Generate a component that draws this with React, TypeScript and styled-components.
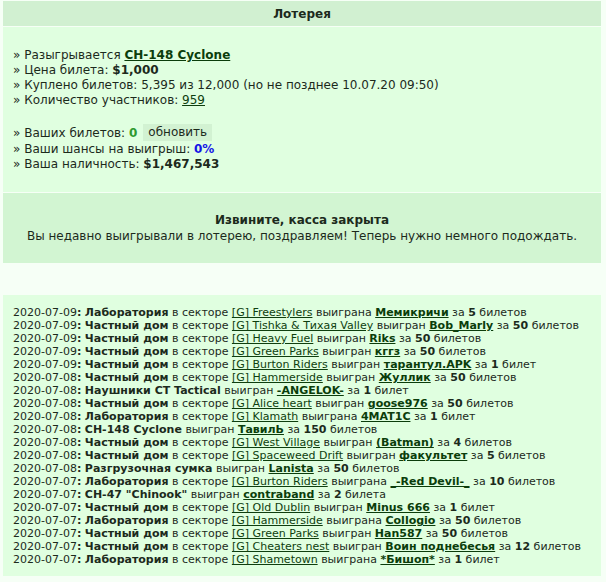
import React from "react";
import styled, { createGlobalStyle, css } from "styled-components";

const GlobalStyle = createGlobalStyle`
    body {
        margin: 0;
        background: #f6fff6;
        font-family: Verdana, "DejaVu Sans", sans-serif;
        color: #1c2a1c;
    }
`;

interface LinkProps {
    $bold?: boolean;
};

interface NumberProps {
    $tone?: "green" | "blue";
};

const Page = styled.div`
    display: flex;
    flex-direction: column;
    gap: 1px;
    padding: 1px 5px 8px 3px;
`;

const Header = styled.div`
    height: 25px;
    line-height: 27px;
    background: #d1f0d1;
    text-align: center;
    font-size: 12px;
    font-weight: bold;
`;

const InfoPanel = styled.div`
    display: flex;
    flex-direction: column;
    gap: 16px;
    background: #e0ffe0;
    padding: 21px 10px 20px 10px;
    font-size: 12px;
`;

const InfoGroup = styled.div`
    display: flex;
    flex-direction: column;
`;

const InfoLine = styled.div`
    line-height: 15px;
    white-space: nowrap;
`;

const Strong = styled.b`
    font-weight: bold;
`;

const Number = styled.b<NumberProps>`
    font-weight: bold;

    ${({ $tone }) => $tone === "green" && css`
        color: #2f9a2f;
    `};

    ${({ $tone }) => $tone === "blue" && css`
        color: #1515e6;
    `};
`;

const Link = styled.a<LinkProps>`
    color: #0e3e0e;
    text-decoration: underline;
    cursor: pointer;

    ${({ $bold }) => $bold && css`
        font-weight: bold;
        color: #0b3d0b;
    `};
`;

const RefreshButton = styled.span`
    display: inline-block;
    margin: 0 0 1px 6px;
    padding: 0 5px;
    line-height: 17px;
    vertical-align: middle;
    background: #d2f2d2;
    cursor: pointer;
`;

const ClosedBox = styled.div`
    background: #d2f5d2;
    padding: 19px 10px 19px;
    text-align: center;
    font-size: 12px;
    line-height: 16px;
`;

const ClosedTitle = styled.div`
    font-weight: bold;
`;

const Spacer = styled.div`
    height: 30px;
`;

const LogPanel = styled.div`
    background: #e0ffe0;
    padding: 11px 10px 10px;
    font-size: 11px;
    line-height: 13px;
`;

const LogRow = styled.div`
    white-space: nowrap;
`;

interface LogEntry {
    date: string;
    item: string;
    sector?: string;
    verb: string;
    winner: string;
    count: number;
    word: string;
};

const log: LogEntry[] = [
    { date: "2020-07-09", item: "Лаборатория", sector: "[G] Freestylers", verb: "выиграна", winner: "Мемикричи", count: 5, word: "билетов" },
    { date: "2020-07-09", item: "Частный дом", sector: "[G] Tishka & Тихая Valley", verb: "выигран", winner: "Bob_Marly", count: 50, word: "билетов" },
    { date: "2020-07-09", item: "Частный дом", sector: "[G] Heavy Fuel", verb: "выигран", winner: "Riks", count: 50, word: "билетов" },
    { date: "2020-07-09", item: "Частный дом", sector: "[G] Green Parks", verb: "выигран", winner: "кггз", count: 50, word: "билетов" },
    { date: "2020-07-09", item: "Частный дом", sector: "[G] Burton Riders", verb: "выигран", winner: "тарантул.APK", count: 1, word: "билет" },
    { date: "2020-07-08", item: "Частный дом", sector: "[G] Hammerside", verb: "выигран", winner: "Жуллик", count: 50, word: "билетов" },
    { date: "2020-07-08", item: "Наушники CT Tactical", verb: "выигран", winner: "-ANGELOK-", count: 1, word: "билет" },
    { date: "2020-07-08", item: "Частный дом", sector: "[G] Alice heart", verb: "выигран", winner: "goose976", count: 50, word: "билетов" },
    { date: "2020-07-08", item: "Лаборатория", sector: "[G] Klamath", verb: "выиграна", winner: "4MAT1C", count: 1, word: "билет" },
    { date: "2020-07-08", item: "CH-148 Cyclone", verb: "выигран", winner: "ТавилЬ", count: 150, word: "билетов" },
    { date: "2020-07-08", item: "Частный дом", sector: "[G] West Village", verb: "выигран", winner: "(Batman)", count: 4, word: "билетов" },
    { date: "2020-07-08", item: "Частный дом", sector: "[G] Spaceweed Drift", verb: "выигран", winner: "факультет", count: 5, word: "билетов" },
    { date: "2020-07-08", item: "Разгрузочная сумка", verb: "выигран", winner: "Lanista", count: 50, word: "билетов" },
    { date: "2020-07-07", item: "Лаборатория", sector: "[G] Burton Riders", verb: "выиграна", winner: "_-Red Devil-_", count: 10, word: "билетов" },
    { date: "2020-07-07", item: "CH-47 \"Chinook\"", verb: "выигран", winner: "contraband", count: 2, word: "билета" },
    { date: "2020-07-07", item: "Частный дом", sector: "[G] Old Dublin", verb: "выигран", winner: "Minus 666", count: 1, word: "билет" },
    { date: "2020-07-07", item: "Лаборатория", sector: "[G] Hammerside", verb: "выиграна", winner: "Collogio", count: 50, word: "билетов" },
    { date: "2020-07-07", item: "Частный дом", sector: "[G] Green Parks", verb: "выигран", winner: "Han587", count: 50, word: "билетов" },
    { date: "2020-07-07", item: "Частный дом", sector: "[G] Cheaters nest", verb: "выигран", winner: "Воин поднебесья", count: 12, word: "билетов" },
    { date: "2020-07-07", item: "Лаборатория", sector: "[G] Shametown", verb: "выиграна", winner: "*Бишоп*", count: 1, word: "билет" },
];

const App = () => (
    <>
        <GlobalStyle />
        <Page>
            <Header>Лотерея</Header>
            <InfoPanel>
                <InfoGroup>
                    <InfoLine>» Разыгрывается <Link $bold>CH-148 Cyclone</Link></InfoLine>
                    <InfoLine>» Цена билета: <Strong>$1,000</Strong></InfoLine>
                    <InfoLine>» Куплено билетов: 5,395 из 12,000 (но не позднее 10.07.20 09:50)</InfoLine>
                    <InfoLine>» Количество участников: <Link>959</Link></InfoLine>
                </InfoGroup>
                <InfoGroup>
                    <InfoLine>» Ваших билетов: <Number $tone="green">0</Number><RefreshButton>обновить</RefreshButton></InfoLine>
                    <InfoLine>» Ваши шансы на выигрыш: <Number $tone="blue">0%</Number></InfoLine>
                    <InfoLine>» Ваша наличность: <Strong>$1,467,543</Strong></InfoLine>
                </InfoGroup>
            </InfoPanel>
            <ClosedBox>
                <ClosedTitle>Извините, касса закрыта</ClosedTitle>
                Вы недавно выигрывали в лотерею, поздравляем! Теперь нужно немного подождать.
            </ClosedBox>
            <Spacer />
            <LogPanel>
                {log.map((entry, i) => (
                    <LogRow key={i}>
                        {entry.date}<Strong>:</Strong> <Strong>{entry.item}</Strong>{" "}
                        {entry.sector && <>в секторе <Link>{entry.sector}</Link> </>}
                        {entry.verb} <Link $bold>{entry.winner}</Link> за <Strong>{entry.count}</Strong> {entry.word}
                    </LogRow>
                ))}
            </LogPanel>
        </Page>
    </>
);

export default App;
